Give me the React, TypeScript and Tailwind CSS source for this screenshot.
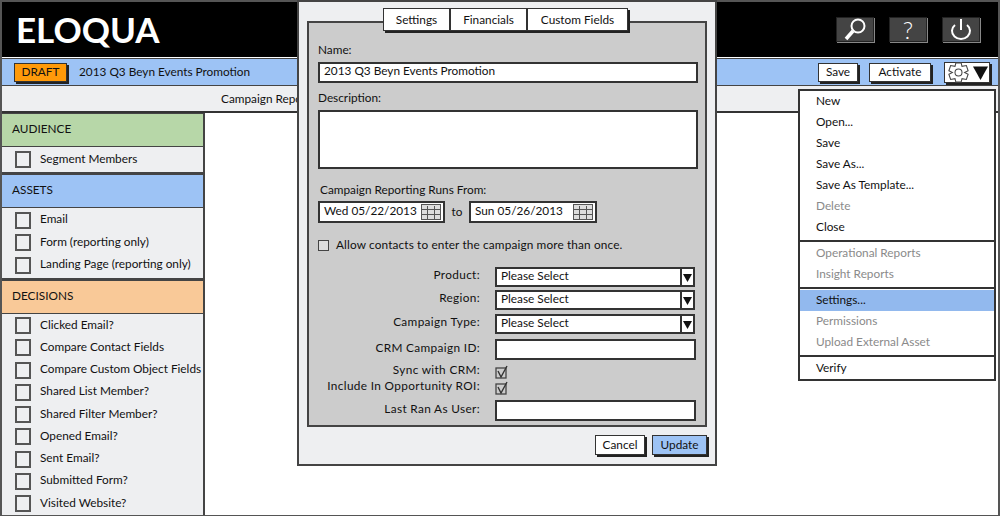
import React from 'react';

const CalendarIcon = () => (
  <svg width="20" height="16" viewBox="0 0 20 16" fill="none" stroke="#555" strokeWidth="1">
    <rect x="0.5" y="0.5" width="19" height="15" fill="#ddd" />
    <path d="M0 5.5h20M0 10.5h20M6.5 2v14M13.5 2v14" />
  </svg>
);

const Triangle = ({ className }: { className: string }) => (
  <svg viewBox="0 0 10 10" className={className} fill="#111">
    <path d="M0 1h10L5 10z" />
  </svg>
);

const CheckBox = () => (
  <span className="w-[16px] h-[17px] shrink-0 border-2 border-[#555] bg-[#eeeff1]" />
);

const Checked = () => (
  <svg width="13" height="14" viewBox="0 0 13 14" fill="none" className="shrink-0">
    <rect x="1" y="3" width="10" height="10" stroke="#444" strokeWidth="1.3" />
    <path d="M3 6l3 6 6-11" stroke="#333" strokeWidth="1.4" />
  </svg>
);

const SidebarHead = ({ label, color }: { label: string; color: string }) => (
  <div className={`h-[34px] flex items-center pl-[10px] pb-[2px] border-y border-r-2 border-[#444] ${color}`}>{label}</div>
);

const SidebarItems = ({ items, pitch }: { items: string[]; pitch: string }) => (
  <div className="flex flex-col border-r-2 border-b-2 border-[#444] bg-[#eeeff1] py-px pl-[13px]">
    {items.map((item) => (
      <div key={item} className={`flex items-center gap-[9px] whitespace-nowrap ${pitch}`}>
        <CheckBox />
        <span className="pb-[2px]">{item}</span>
      </div>
    ))}
  </div>
);

const SmallButton = ({ label, className }: { label: string; className: string }) => (
  <button className={`flex items-center justify-center bg-white border border-[#333] shadow-[2px_2px_0_#222] ${className}`}>{label}</button>
);

const TextBox = ({ children, className }: { children?: React.ReactNode; className: string }) => (
  <div className={`flex items-center pl-1 bg-white border-2 border-[#333] whitespace-nowrap ${className}`}>{children}</div>
);

const Select = () => (
  <div className="flex items-center w-[200px] h-[20px] pl-1 bg-white border-2 border-[#333] justify-between">
    <span className="pb-[2px]">Please Select</span>
    <span className="h-full w-[13px] border-l-2 border-[#333] flex items-center justify-center">
      <Triangle className="w-[9px] h-[9px]" />
    </span>
  </div>
);

const FormRow = ({ label, children, className }: { label: string; children: React.ReactNode; className: string }) => (
  <div className={`flex items-center ${className}`}>
    <span className="w-[162px] text-right whitespace-nowrap mr-[15px] pb-[4px] tracking-[0.35px]">{label}</span>
    {children}
  </div>
);

const MenuItem = ({ label, off, on }: { label: string; off?: boolean; on?: boolean }) => (
  <div className={`h-[21px] flex items-center pl-[16px] pb-px ${off ? 'text-[#8a8a8a]' : ''} ${on ? 'bg-[#92b9ee]' : ''}`}>{label}</div>
);

const MenuLine = ({ className }: { className: string }) => <div className={`h-[2px] bg-[#333] ${className}`} />;

const headerIcon = 'w-[38px] h-[25px] flex items-center justify-center bg-[#444] border border-[#222] shadow-[1px_1px_0_#888] text-white';

export default function App() {
  return (
    <div className="relative h-[516px] w-full overflow-hidden bg-white border-l-2 border-r-2 border-b border-[#555] text-[11.8px] leading-none text-[#111] font-['Lato',sans-serif]">
      <header className="h-[57px] -ml-[2px] -mr-[2px] bg-black border-2 border-b-0 border-[#555] flex items-center pl-[14px] pr-[18px]">
        <span className="text-[35px] font-bold text-white">ELOQUA</span>
        <div className="ml-auto flex gap-[15px]">
          <button className={headerIcon}>
            <svg width="28" height="24" viewBox="0 0 28 24" fill="none" stroke="white" strokeWidth="2">
              <circle cx="17" cy="8" r="6.5" />
              <path d="M12 13L5 21" strokeWidth="3.5" />
            </svg>
          </button>
          <button className={`${headerIcon} text-[24px] font-light`}>?</button>
          <button className={headerIcon}>
            <svg width="28" height="23" viewBox="0 0 28 23" fill="none" stroke="white" strokeWidth="2">
              <path d="M8 7a9 8 0 1 0 12 0M14 1v11" />
            </svg>
          </button>
        </div>
      </header>
      <div className="h-[28px] -ml-[2px] -mr-[2px] mt-px bg-[#9dc3f5] border-y border-[#444] flex items-center pl-[14px] pr-[10px]">
        <span className="w-[53px] h-[19px] flex items-center justify-center bg-[#ff9a0a] border border-[#333] shadow-[2px_2px_0_#222]">DRAFT</span>
        <span className="ml-[12px]">2013 Q3 Beyn Events Promotion</span>
        <SmallButton label="Save" className="ml-auto w-[40px] h-[19px]" />
        <SmallButton label="Activate" className="ml-[11px] w-[62px] h-[19px]" />
        <div className="ml-[13px] w-[46px] h-[21px] flex items-center justify-center gap-[2px] bg-white border border-[#333] shadow-[2px_2px_0_#222]">
          <svg width="25" height="21" viewBox="0 0 24 24" fill="none" stroke="#444" strokeWidth="1.2">
            <path d="M9 1h6l1 4 5-1 2 6-4 2 4 2-2 6-5-1-1 4H9l-1-4-5 1-2-6 4-2-4-2 2-6 5 1z" />
            <circle cx="12" cy="12" r="4" />
          </svg>
          <Triangle className="w-[15px] h-[15px]" />
        </div>
      </div>
      <div className="h-[27px] bg-[#eeeff1] border-b-2 border-[#333] flex items-center pl-[219px] whitespace-nowrap">Campaign Repor</div>
      <aside className="w-[203px] flex flex-col">
        <SidebarHead label="AUDIENCE" color="bg-[#b7d7a8]" />
        <SidebarItems items={['Segment Members']} pitch="h-[23px]" />
        <SidebarHead label="ASSETS" color="bg-[#9dc3f5]" />
        <SidebarItems items={['Email', 'Form (reporting only)', 'Landing Page (reporting only)']} pitch="h-[22.5px]" />
        <SidebarHead label="DECISIONS" color="bg-[#f9c998]" />
        <SidebarItems
          items={['Clicked Email?', 'Compare Contact Fields', 'Compare Custom Object Fields', 'Shared List Member?', 'Shared Filter Member?', 'Opened Email?', 'Sent Email?', 'Submitted Form?', 'Visited Website?']}
          pitch="h-[22.25px]"
        />
      </aside>

      <div className="absolute left-[295px] top-0 w-[420px] h-[466px] bg-[#eeeff1] border-2 border-[#444] pt-[19px] px-[8px]">
        <div className="h-[406px] bg-[#cccccc] border-2 border-[#444] px-[9px]">
          <div className="flex justify-center -mt-[15px] pr-[3px]">
            <div className="flex h-[23px] bg-white border border-[#333] shadow-[2px_2px_0_#222]">
              <span className="w-[67px] flex items-center justify-center border-r-2 border-[#333]">Settings</span>
              <span className="w-[77px] flex items-center justify-center border-r-2 border-[#333]">Financials</span>
              <span className="w-[99px] flex items-center justify-center">Custom Fields</span>
            </div>
          </div>
          <div className="mt-[13px] mb-[6px] h-[12px] flex items-center">Name:</div>
          <TextBox className="w-[380px] h-[21px] pb-[3px]">2013 Q3 Beyn Events Promotion</TextBox>
          <div className="mt-[9px] mb-[6px] h-[12px] flex items-center">Description:</div>
          <TextBox className="w-[380px] h-[59px]" />
          <div className="mt-[15px] mb-[5px] ml-[2px] h-[12px] flex items-center">Campaign Reporting Runs From:</div>
          <div className="flex items-center">
            <TextBox className="w-[127px] h-[22px] justify-between pr-[2px]"><span className="pb-[2px]">Wed 05/22/2013</span><CalendarIcon /></TextBox>
            <span className="w-[24px] text-center">to</span>
            <TextBox className="w-[128px] h-[22px] justify-between pr-[2px]"><span className="pb-[2px]">Sun 05/26/2013</span><CalendarIcon /></TextBox>
          </div>
          <div className="mt-[15px] flex items-center gap-[7px] h-[14px] tracking-[0.14px]">
            <span className="w-[11px] h-[11px] border border-[#444] bg-[#ddd]" />
            Allow contacts to enter the campaign more than once.
          </div>
          <FormRow label="Product:" className="mt-[15px] h-[20px]"><Select /></FormRow>
          <FormRow label="Region:" className="mt-[3px] h-[20px]"><Select /></FormRow>
          <FormRow label="Campaign Type:" className="mt-[4px] h-[20px]"><Select /></FormRow>
          <FormRow label="CRM Campaign ID:" className="mt-[5px] h-[21px]"><TextBox className="w-[201px] h-[21px]" /></FormRow>
          <FormRow label="Sync with CRM:" className="mt-[5px] h-[14px]"><Checked /></FormRow>
          <FormRow label="Include In Opportunity ROI:" className="mt-[2px] h-[14px]"><Checked /></FormRow>
          <FormRow label="Last Ran As User:" className="mt-[5px] h-[21px]"><TextBox className="w-[201px] h-[21px]" /></FormRow>
        </div>
        <div className="flex justify-end gap-[7px] mt-[8px]">
          <SmallButton label="Cancel" className="w-[50px] h-[20px]" />
          <SmallButton label="Update" className="w-[55px] h-[20px] !bg-[#9dc3f5]" />
        </div>
      </div>

      <div className="absolute left-[796px] top-[89px] w-[198px] h-[292px] bg-white border-2 border-[#333]">
        <MenuItem label="New" />
        <MenuItem label="Open..." />
        <MenuItem label="Save" />
        <MenuItem label="Save As..." />
        <MenuItem label="Save As Template..." />
        <MenuItem label="Delete" off />
        <MenuItem label="Close" />
        <MenuLine className="my-[1.5px]" />
        <MenuItem label="Operational Reports" off />
        <MenuItem label="Insight Reports" off />
        <MenuLine className="my-[1.5px]" />
        <MenuItem label="Settings..." on />
        <MenuItem label="Permissions" off />
        <MenuItem label="Upload External Asset" off />
        <MenuLine className="my-[1.5px]" />
        <MenuItem label="Verify" />
      </div>
    </div>
  );
}
